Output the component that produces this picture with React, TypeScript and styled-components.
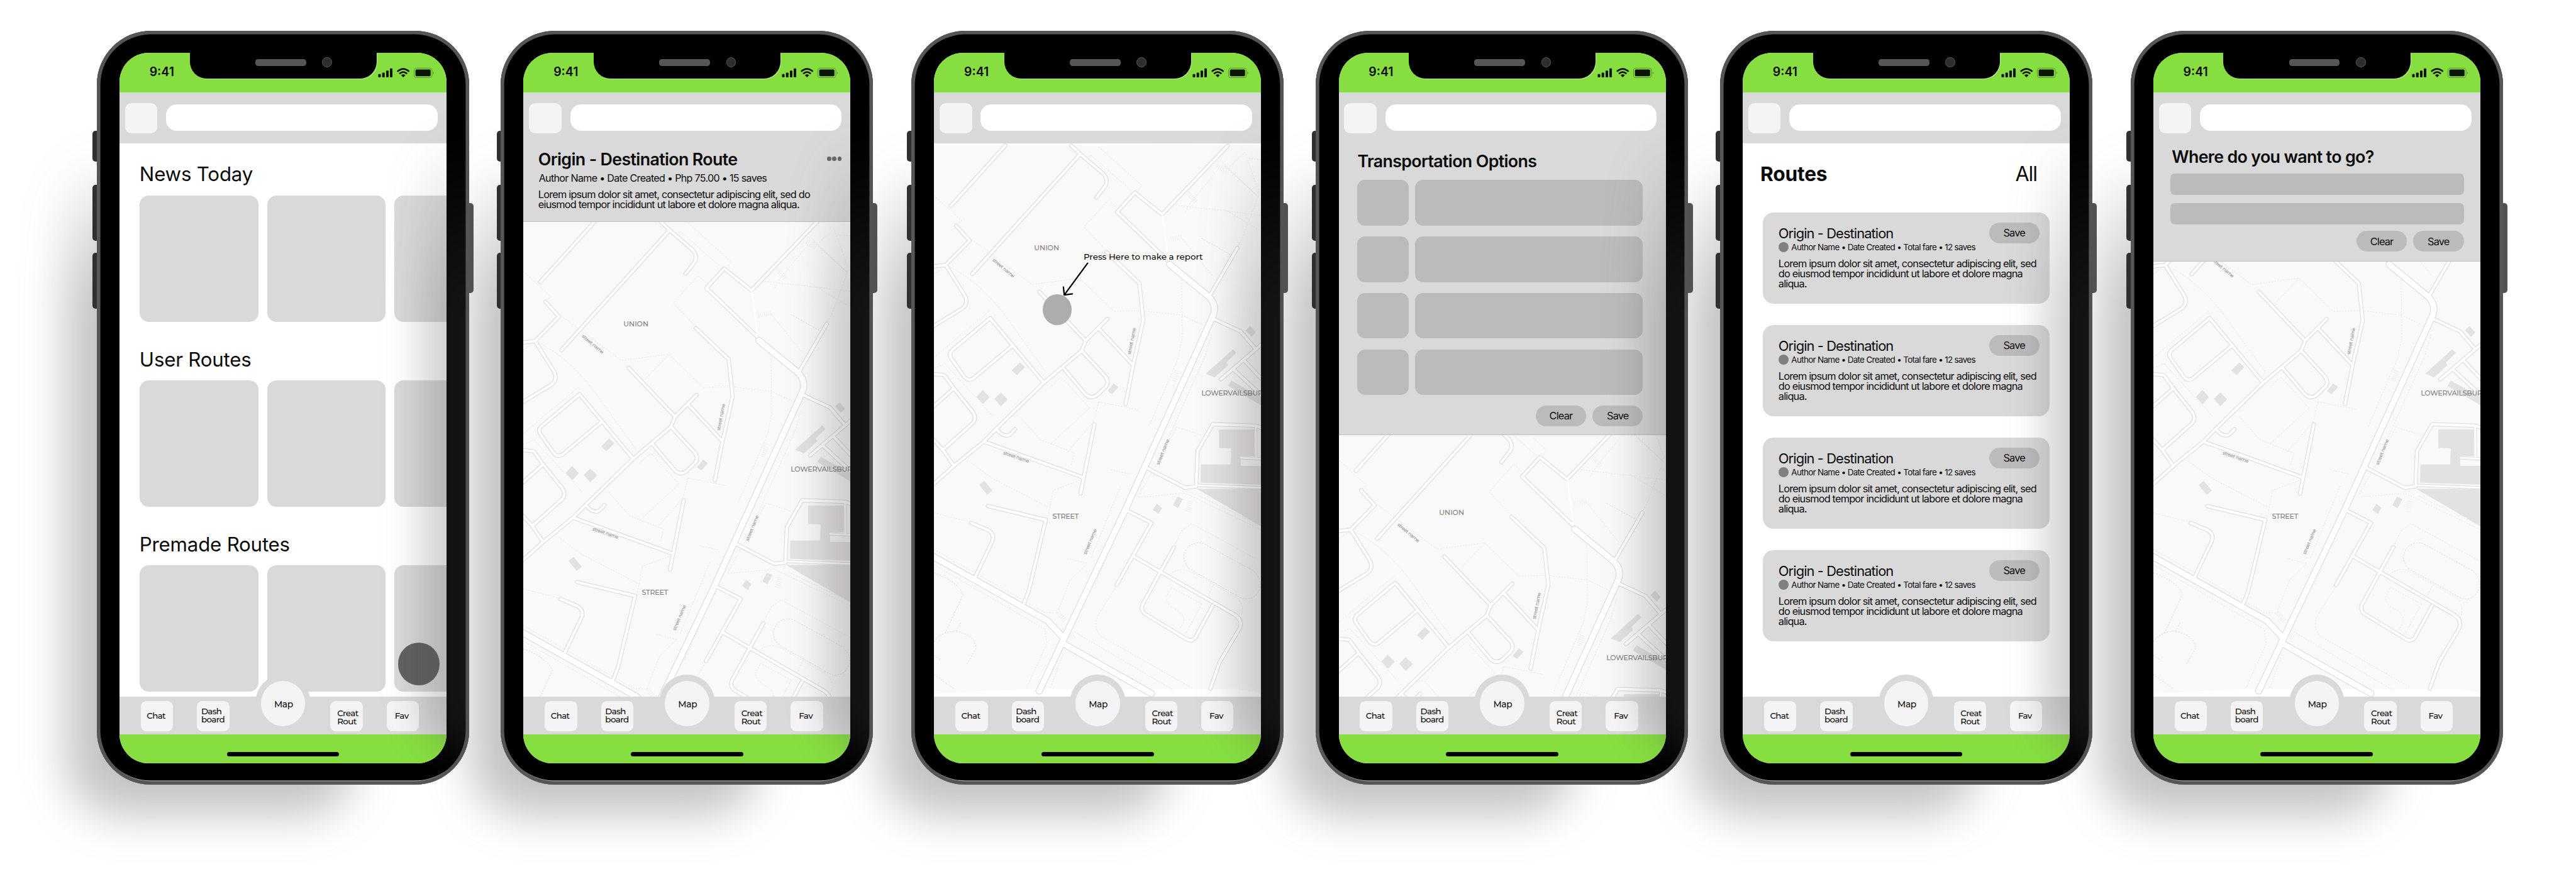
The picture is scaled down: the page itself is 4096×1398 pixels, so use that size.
import React from "react";
import styled, { createGlobalStyle, css } from "styled-components";

/* One design unit of the artboard, in CSS pixels. */
const UNIT = 0.44684;
const u = (n: number) => `${(n * UNIT).toFixed(2)}px`;

const color = {
  green: "#86de40",
  panel: "#d9d9d9",
  tile: "#f4f4f4",
  field: "#bbbbbb",
  ink: "#0c0c0c",
};

const GlobalStyle = createGlobalStyle`
  html, body { margin: 0; padding: 0; background: #ffffff; }
  body { font-family: "Inter", "Liberation Sans", sans-serif; color: ${color.ink}; overflow: hidden; }
  *, *::before, *::after { box-sizing: border-box; }
`;

const Artboard = styled.main`
  display: flex;
  align-items: flex-start;
  width: 4096px;
  height: 1398px;
  padding: 49px 0 0 ${u(344)};
  background: #ffffff;
  isolation: isolate;
  overflow: hidden;
`;

/* ---------- Phone body ---------- */

const Phone = styled.article<{ $gap: number }>`
  position: relative;
  flex: none;
  width: ${u(1325)};
  height: ${u(2684)};
  margin-left: ${(p) => u(p.$gap)};
`;

const DropShadow = styled.div`
  position: absolute;
  z-index: -1;
  left: ${u(-108)};
  top: ${u(430)};
  width: ${u(1030)};
  height: ${u(2360)};
  border-radius: ${u(190)};
  background: linear-gradient(to bottom, rgba(78, 70, 72, 0), rgba(78, 70, 72, 0.33) ${u(520)});
  filter: blur(${u(78)});
`;

const SideKey = styled.span<{ $top: number; $height: number; $right?: boolean }>`
  position: absolute;
  top: ${(p) => u(p.$top)};
  height: ${(p) => u(p.$height)};
  width: ${u(30)};
  border-radius: ${u(11)};
  ${(p) =>
    p.$right
      ? css`
          right: ${u(-16)};
          background: #535151;
        `
      : css`
          left: ${u(-15)};
          background: #303030;
        `}
`;

const Frame = styled.div`
  position: relative;
  width: 100%;
  height: 100%;
  padding: 35px ${u(80)} ${u(77)} ${u(81)};
  border-radius: ${u(192)};
  background: #000000;
  box-shadow: inset 0 0 0 ${u(12.5)} #565656, inset 0 ${u(-15)} 0 #a9a9a9;
  overflow: hidden;
`;

const EdgeShade = styled.div`
  position: absolute;
  left: ${u(1162)};
  top: ${u(342)};
  width: ${u(420)};
  height: ${u(2240)};
  border-radius: ${u(200)};
  background: linear-gradient(to bottom, rgba(78, 70, 72, 0), rgba(78, 70, 72, 0.27) ${u(620)});
  filter: blur(${u(70)});
`;

const Screen = styled.div`
  position: relative;
  display: flex;
  flex-direction: column;
  width: ${u(1164)};
  height: ${u(2528)};
  border-radius: ${u(104)};
  background: #ffffff;
  overflow: hidden;
`;

/* ---------- Status bar ---------- */

const StatusBar = styled.header`
  display: grid;
  grid-template-columns: ${u(250)} ${u(665)} ${u(249)};
  flex: none;
  height: ${u(142)};
  background: ${color.green};
`;

const Clock = styled.span`
  padding-left: ${u(107)};
  font-size: ${u(43.5)};
  font-weight: 600;
  line-height: ${u(138)};
`;

const Notch = styled.div`
  display: flex;
  align-items: center;
  height: ${u(91.5)};
  padding: 0 0 ${u(23)} ${u(233)};
  gap: ${u(57)};
  border-radius: 0 0 ${u(60)} ${u(60)};
  background: #000000;
  box-shadow: 1px 1px 0 rgba(255, 255, 255, 0.4);
`;

const Speaker = styled.span`
  width: ${u(181)};
  height: ${u(24)};
  border-radius: ${u(10)};
  background: #565656;
`;

const Lens = styled.span`
  width: ${u(35)};
  height: ${u(35)};
  border: 1px solid #5a5a5a;
  border-radius: 50%;
  background: #2e2e2e;
`;

const StatusIcons = styled.svg`
  width: ${u(202)};
  height: ${u(38)};
  margin: ${u(51)} 0 0 ${u(5)};
`;

function StatusGlyphs() {
  return (
    <StatusIcons viewBox="1127 239 202 38" aria-hidden>
      <g fill="#0b1405">
        <rect x="1128" y="263" width="9" height="12" rx="2.5" />
        <rect x="1142" y="258" width="9" height="17" rx="2.5" />
        <rect x="1156" y="250.5" width="9" height="24.5" rx="2.5" />
        <rect x="1169.5" y="243" width="9" height="32" rx="2.5" />
        <path d="M1209.5 267.2 Q1217 261 1224.5 267.2 L1217 274.6 Z" />
        <rect x="1260.5" y="247" width="54" height="24" rx="4" />
        <path d="M1323.5 254 Q1328 259 1323.5 264 Z" opacity=".5" />
      </g>
      <g fill="none" stroke="#0b1405" strokeWidth="5.6">
        <path d="M1196 254.5 Q1217 235.5 1238 254.5" />
        <path d="M1203.4 262 Q1217 250 1230.6 262" />
      </g>
      <rect x="1255.5" y="242" width="64" height="34" rx="9" fill="none" stroke="#0b1405" strokeWidth="2" opacity=".42" />
    </StatusIcons>
  );
}

/* ---------- Search header ---------- */

const SearchHeader = styled.div`
  display: flex;
  flex: none;
  align-items: flex-start;
  height: ${u(180)};
  padding: ${u(36)} ${u(32)} 0 ${u(20)};
  gap: ${u(31)};
  background: ${color.panel};
`;

const MenuTile = styled.span`
  flex: none;
  width: ${u(115)};
  height: ${u(109)};
  border-radius: ${u(22)};
  background: ${color.tile};
`;

const SearchField = styled.span`
  flex: 1;
  height: ${u(93)};
  margin-top: ${u(6)};
  border-radius: ${u(38)};
  background: #ffffff;
`;

/* ---------- Bottom navigation ---------- */

const Content = styled.section`
  position: relative;
  display: flex;
  flex: 1;
  flex-direction: column;
  min-height: 0;
  overflow: hidden;
`;

const NavBar = styled.nav`
  position: relative;
  display: flex;
  flex: none;
  height: ${u(134)};
  padding: ${u(15)} 0 0 ${u(76)};
  background: ${color.panel};
  font-family: "Montserrat", "Inter", sans-serif;
  font-size: ${u(30)};
  font-weight: 500;
  line-height: ${u(30)};
  letter-spacing: -0.045em;
`;

const NavTile = styled.span<{ $gap?: number; $top: number; $inset: number }>`
  flex: none;
  width: ${u(115)};
  height: ${u(108)};
  margin-left: ${(p) => u(p.$gap ?? 0)};
  padding: ${(p) => u(p.$top)} 0 0 ${(p) => u(p.$inset)};
  border-radius: ${u(20)};
  background: ${color.tile};
  white-space: nowrap;
`;

const MapButton = styled.span`
  position: absolute;
  left: ${u(483)};
  top: ${u(-78)};
  display: flex;
  align-items: center;
  justify-content: center;
  width: ${u(198)};
  height: ${u(204)};
  border: ${u(21)} solid ${color.panel};
  border-top-width: ${u(24)};
  border-radius: 50%;
  background: ${color.tile};
  font-size: ${u(31)};
  letter-spacing: -0.025em;
  padding: ${u(6)} 0 0 ${u(4)};
`;

const HomeArea = styled.footer`
  display: flex;
  flex: none;
  justify-content: center;
  height: ${u(102.5)};
  padding-top: ${u(63)};
  background: ${color.green};
`;

const HomeIndicator = styled.span`
  width: ${u(400)};
  height: ${u(16)};
  border-radius: ${u(8)};
  background: #000000;
`;

type DeviceProps = { gap?: number; shaded?: boolean; children: React.ReactNode };

function Device({ gap = 0, shaded = true, children }: DeviceProps) {
  return (
    <Phone $gap={gap}>
      <DropShadow />
      <SideKey $top={355} $height={110} />
      <SideKey $top={548} $height={199} />
      <SideKey $top={790} $height={200} />
      <SideKey $top={614} $height={320} $right />
      <Frame>
        <Screen>
          <StatusBar>
            <Clock>9:41</Clock>
            <Notch>
              <Speaker />
              <Lens />
            </Notch>
            <StatusGlyphs />
          </StatusBar>
          <SearchHeader>
            <MenuTile />
            <SearchField />
          </SearchHeader>
          <Content>{children}</Content>
          <NavBar>
            <NavTile $top={38} $inset={21}>Chat</NavTile>
            <NavTile $gap={85} $top={23} $inset={15}>
              Dash
              <br />
              board
            </NavTile>
            <NavTile $gap={360} $top={29} $inset={24}>
              Creat
              <br />
              Rout
            </NavTile>
            <NavTile $gap={85} $top={38} $inset={29}>Fav</NavTile>
            <MapButton>Map</MapButton>
          </NavBar>
          <HomeArea>
            <HomeIndicator />
          </HomeArea>
        </Screen>
        {shaded && <EdgeShade />}
      </Frame>
    </Phone>
  );
}

/* ---------- Street map ---------- */

const MapViewport = styled.div`
  flex: 1;
  min-height: 0;
  overflow: hidden;
  background: #f9f9f9;
`;

const MapDrawing = styled.svg<{ $shift: number }>`
  display: block;
  width: ${u(1164)};
  height: ${u(1970)};
  margin-top: ${(p) => u(p.$shift)};
`;

const SideStreets = [
  "M420 518 L226 733",
  "M655 518 L687 548 L765 615 Q788 636 777 660 L744 703",
  "M687 548 L302 975",
  "M1212 518 L978 763 L881 685 L818 754 L997 926",
  "M1246 882 L1148 1052",
  "M1162 1135 L1257 1179 L1311 1242",
  "M1330 1227 L1187 1350",
  "M1272 1285 L1335 1352",
  "M1232 1315 L1335 1410",
  "M245 803 L293 856 L208 943 L160 948",
  "M208 943 L276 1052 Q290 1078 268 1097 L160 1163",
  "M541 1038 L706 1212",
  "M783 1135 L706 1212 L692 1248 L557 1362 L388 1526 L345 1570 L237 1658 L160 1727",
  "M752 1168 L875 1300",
  "M780 897 L897 1008 L911 1140 L875 1300 L848 1438",
  "M557 1362 L366 1132 L230 1247 Q217 1260 228 1276 L275 1342 Q289 1358 307 1346 L443 1232",
  "M692 1248 L774 1337 Q793 1360 776 1378 L748 1405 Q726 1422 706 1404 L625 1308",
  "M160 1331 L203 1335 L237 1382 L305 1467 Q320 1490 302 1508 L198 1601",
  "M237 1382 L160 1450",
  "M160 1560 L198 1601 L237 1658",
  "M388 1526 Q406 1551 428 1550 Q436 1550 455 1527",
  "M345 1572 L697 1699",
  "M737 1510 L688 1756",
  "M358 1801 L564 1850 L503 2105 L486 2148",
  "M298 1861 L358 1886 Q384 1901 373 1928 L313 2053",
  "M848 1814 L940 1861 L816 2082",
  "M878 1981 L1235 2187 Q1268 2208 1253 2238 L1182 2358 L1150 2451",
  "M1020 1948 L909 2150 Q900 2170 916 2184 L1062 2273 Q1084 2287 1097 2268 L1158 2155",
  "M918 1662 L1060 1736 L1099 1731 L1104 1605 L1158 1510 L1312 1515 L1335 1524",
];

const Avenues = [
  "M1005 941 L1140 1052 Q1174 1083 1160 1122 L848 1812 L625 2281 L541 2459",
  "M150 1973 L570 2209 L625 2268 M625 2290 L940 2468",
];

const Lanes = ["M1099 1727 L1335 1736", "M1311 1517 L1312 1628", "M1258 1629 L1335 1633"];

const Footpaths = [
  "M752 522 L906 660 L890 682",
  "M637 522 L700 570 L725 552 L870 680",
  "M166 695 L265 786 L240 800",
  "M780 892 L700 808 L788 710 L830 748",
  "M300 852 L515 1012 L685 990 L805 1108 L910 1106 L1050 1122 L1140 1165",
  "M685 990 L598 1080",
  "M166 975 L210 945 Q340 1000 460 1180 L565 1325 L545 1345",
  "M166 1272 L366 1105",
  "M1048 985 L1050 1200 L1035 1275 L930 1520",
  "M1155 1190 L1130 1270 L1000 1560",
  "M1212 600 L1272 542 L1325 690",
  "M1185 570 L1320 700 L1262 850 L1148 1052",
  "M1285 565 L1330 568",
  "M1025 730 L1200 750 L1330 766",
  "M1045 843 L1160 985",
  "M1060 755 L1080 720 L1180 600",
  "M1200 745 L1330 822",
  "M166 1310 L205 1295 L375 1480",
  "M720 1452 L620 1342 L575 1382",
  "M752 1430 L735 1500 L640 1610",
  "M752 1430 L892 1458",
  "M720 1452 L580 1582",
  "M440 1481 L470 1481 L545 1565 L665 1612 L655 1655",
  "M290 1640 L370 1700 L575 1806",
  "M685 1710 L590 1745 L570 1850",
  "M795 1672 L865 1687",
  "M166 1825 L295 1858",
  "M166 1955 L560 2180 L605 2182 L650 2065 L712 2005 L640 1987",
  "M166 2010 L560 2238 L568 2290 L495 2450",
  "M1330 1885 L1060 1755 L892 1770 L1030 1520 L1118 1548",
  "M1330 1872 L1110 1765",
  "M725 1985 L830 1730",
  "M740 2080 L900 1700",
  "M625 2330 L580 2450",
  "M1020 1945 L1048 1888 L1083 1864 L1330 1998",
  "M1258 2200 Q1275 2150 1240 2125 L1090 2040 Q1040 2010 1000 2050",
  "M1158 2085 L1140 2125 M1120 2150 L1060 2258 M1120 2150 L1010 2090 L992 2125 Q995 2155 1030 2170 Q1062 2195 1055 2215 L1040 2240",
  "M810 2095 L750 2190 Q730 2235 762 2265 L1082 2447",
  "M665 2248 L1028 2462",
];

const DarkFootpaths = [
  "M1075 2025 Q1045 1990 1062 1960 Q1080 1925 1125 1934 L1300 2030 Q1332 2055 1326 2092 Q1310 2140 1262 2130 Z",
  "M166 2038 Q250 2070 270 2115 L205 2255 M166 2285 Q185 2250 245 2246 L262 2215 M245 2246 Q320 2265 315 2310 L282 2365",
  "M166 2333 L190 2348 M166 2400 L235 2450",
  "M1118 848 L1222 906",
  "M1200 590 L1320 700",
];

const Stairs = [
  "M1175 590 L1208 612",
  "M1068 685 L1098 718",
  "M1003 852 L1047 842",
  "M1020 1355 L1032 1318",
  "M1070 1820 L1082 1780",
  "M608 2180 L632 2210",
  "M650 2270 L668 2260",
];

const Buildings = [
  "M1230 1243 L1242 1255 L1207 1290 L1212 1300 L1165 1343 L1133 1330 Z",
  "M1225 1355 L1335 1416 L1335 1445 L1212 1373 Z",
  "M1291 1160 L1311 1183 L1296 1198 L1275 1176 Z",
  "M443 1318 L472 1290 L490 1306 L462 1335 Z",
  "M340 1388 L364 1413 L341 1438 L317 1413 Z",
  "M404 1397 L429 1421 L404 1446 L381 1419 Z",
  "M784 1392 L806 1365 L823 1377 L800 1403 Z",
  "M345 1711 L374 1746 L356 1761 L327 1726 Z",
  "M1033 1767 L1052 1776 L1035 1809 L1017 1798 Z",
  "M960 1793 L978 1808 L965 1828 L945 1815 Z",
  "M1180 1528 L1305 1528 L1305 1623 L1258 1623 L1258 1658 L1335 1658 L1335 1725 L1115 1718 L1116 1653 L1222 1653 L1224 1596 L1180 1594 Z",
  "M1102 1740 L1335 1740 L1335 1876 Z",
];

const StreetNames = [
  { x: 373, y: 927, angle: 40 },
  { x: 866, y: 1262, angle: -79 },
  { x: 411, y: 1616, angle: 19 },
  { x: 968, y: 1655, angle: -68 },
  { x: 708, y: 1974, angle: -67 },
];

function StreetMap({ shift = 0 }: { shift?: number }) {
  return (
    <MapViewport>
      <MapDrawing $shift={shift} viewBox="166 510 1164 1970" aria-label="Street map">
        <rect x="166" y="510" width="1164" height="1970" fill="#f9f9f9" />
        <path d="M166 510 H1330 V517 L1020 515 L640 517 H166 Z" fill="#ffffff" />
        <path d="M166 2480 V2468 L490 2452 L1255 2453 L1330 2466 V2480 Z" fill="#ffffff" />
        <g fill="#e3e1e2">
          {Buildings.map((d) => (
            <path key={d} d={d} />
          ))}
        </g>
        <g fill="none" stroke="#e9e9e9" strokeWidth="2" strokeDasharray="6 4">
          {Footpaths.map((d) => (
            <path key={d} d={d} />
          ))}
        </g>
        <g fill="none" stroke="#dadada" strokeWidth="2" strokeDasharray="6 4">
          {DarkFootpaths.map((d) => (
            <path key={d} d={d} />
          ))}
        </g>
        <g fill="none" stroke="#eeeeee" strokeWidth="18" strokeDasharray="2 5">
          {Stairs.map((d) => (
            <path key={d} d={d} />
          ))}
        </g>
        <g fill="none" stroke="#d9d9d9" strokeLinecap="round" strokeLinejoin="round">
          {SideStreets.map((d) => (
            <path key={d} d={d} strokeWidth="14.5" />
          ))}
          {Avenues.map((d) => (
            <path key={d} d={d} strokeWidth="25" />
          ))}
          {Lanes.map((d) => (
            <path key={d} d={d} strokeWidth="11" />
          ))}
        </g>
        <g fill="none" stroke="#ffffff" strokeLinecap="round" strokeLinejoin="round">
          <path d="M980 768 L1000 925" strokeWidth="6" />
          {SideStreets.map((d) => (
            <path key={d} d={d} strokeWidth="10" />
          ))}
          {Avenues.map((d) => (
            <path key={d} d={d} strokeWidth="20.5" />
          ))}
          {Lanes.map((d) => (
            <path key={d} d={d} strokeWidth="7" />
          ))}
        </g>
        <g fontFamily="Montserrat, Inter, sans-serif" fontSize="25" fontWeight="500" fill="#7d7d7d">
          <text x="522.5" y="890">UNION</text>
          <text x="588" y="1847" letterSpacing="-.6">STREET</text>
          <text x="1117.5" y="1407" letterSpacing="-.7">LOWERVAILSBURG</text>
        </g>
        <g fontFamily="Montserrat, Inter, sans-serif" fontSize="17" fontWeight="500" fill="#8f8f8f" letterSpacing="-.8">
          {StreetNames.map((s) => (
            <text key={s.x} transform={`translate(${s.x} ${s.y}) rotate(${s.angle})`}>
              street name
            </text>
          ))}
        </g>
      </MapDrawing>
    </MapViewport>
  );
}

/* ---------- Shared panel parts ---------- */

const Panel = styled.div<{ $height: number; $top: number; $left: number; $right: number }>`
  display: flex;
  flex: none;
  flex-direction: column;
  height: ${(p) => u(p.$height)};
  padding: ${(p) => u(p.$top)} ${(p) => u(p.$right)} 0 ${(p) => u(p.$left)};
  border-bottom: ${u(3)} solid #bfbfbf;
  background: ${color.panel};
`;

const PanelTitle = styled.h2<{ $inset?: number }>`
  margin: 0 0 0 ${(p) => u(p.$inset ?? 0)};
  font-size: ${u(60)};
  font-weight: 600;
  line-height: ${u(72)};
  letter-spacing: -0.0245em;
  white-space: nowrap;
`;

const BodyCopy = styled.p<{ $gap: number }>`
  margin: ${(p) => u(p.$gap)} 0 0;
  font-size: ${u(36.5)};
  line-height: ${u(36)};
  letter-spacing: -0.049em;
  white-space: nowrap;
`;

const Pill = styled.span`
  display: flex;
  flex: none;
  align-items: center;
  justify-content: center;
  width: ${u(180)};
  height: ${u(75)};
  border-radius: ${u(38)};
  background: ${color.field};
  font-size: ${u(36.5)};
  letter-spacing: -0.05em;
`;

const PillRow = styled.div<{ $top: number }>`
  display: flex;
  justify-content: flex-end;
  gap: ${u(22)};
  margin-top: ${(p) => u(p.$top)};
`;

/* ---------- Home ---------- */

const Feed = styled.div`
  display: flex;
  flex: none;
  flex-direction: column;
  gap: ${u(94)};
  padding: ${u(70.5)} 0 0 ${u(72)};
`;

const SectionTitle = styled.h2`
  margin: 0 0 ${u(31.5)} ${u(-0.5)};
  font-size: ${u(70)};
  font-weight: 400;
  line-height: ${u(84)};
  letter-spacing: -0.007em;
  white-space: nowrap;
`;

const CardStrip = styled.div`
  display: flex;
  gap: ${u(31.5)};
`;

const Card = styled.span`
  flex: none;
  width: ${u(422)};
  height: ${u(449)};
  border-radius: ${u(33)};
  background: ${color.panel};
`;

const FloatingAction = styled.span`
  position: absolute;
  left: ${u(991)};
  bottom: ${u(41)};
  width: ${u(149)};
  height: ${u(151)};
  border-radius: 50%;
  background: #606060;
`;

function HomeScreen() {
  return (
    <>
      <Feed>
        {["News Today", "User Routes", "Premade Routes"].map((title) => (
          <div key={title}>
            <SectionTitle>{title}</SectionTitle>
            <CardStrip>
              <Card />
              <Card />
              <Card />
            </CardStrip>
          </div>
        ))}
      </Feed>
      <FloatingAction />
    </>
  );
}

/* ---------- Route detail ---------- */

const TitleRow = styled.div`
  display: flex;
  align-items: center;
  justify-content: space-between;
`;

const Dots = styled.span`
  display: flex;
  gap: ${u(3)};
  margin: 0 ${u(32)} ${u(4)} 0;

  i {
    width: ${u(15)};
    height: ${u(15)};
    border-radius: 50%;
    background: #666666;
  }
`;

const DetailMeta = styled.p`
  margin: ${u(9.7)} 0 0 ${u(2)};
  font-size: ${u(36)};
  line-height: ${u(44)};
  letter-spacing: -0.0427em;
  white-space: nowrap;
`;

function RouteDetailScreen() {
  return (
    <>
      <Panel $height={281} $top={21} $left={52.5} $right={0}>
        <TitleRow>
          <PanelTitle>Origin - Destination Route</PanelTitle>
          <Dots>
            <i />
            <i />
            <i />
          </Dots>
        </TitleRow>
        <DetailMeta>Author Name • Date Created • Php 75.00 • 15 saves</DetailMeta>
        <BodyCopy $gap={17.6}>
          Lorem ipsum dolor sit amet, consectetur adipiscing elit, sed do
          <br />
          eiusmod tempor incididunt ut labore et dolore magna aliqua.
        </BodyCopy>
      </Panel>
      <StreetMap shift={-9} />
    </>
  );
}

/* ---------- Report ---------- */

const ReportPin = styled.span`
  position: absolute;
  left: ${u(387)};
  top: ${u(538)};
  width: ${u(103)};
  height: ${u(108)};
  border-radius: 50%;
  background: #adadad;
`;

const ReportHint = styled.span`
  position: absolute;
  left: ${u(532)};
  top: ${u(385)};
  font-family: "Montserrat", "Inter", sans-serif;
  font-size: ${u(30)};
  font-weight: 500;
  line-height: ${u(40)};
  white-space: nowrap;
`;

const ReportArrow = styled.svg`
  position: absolute;
  left: ${u(450)};
  top: ${u(418)};
  width: ${u(110)};
  height: ${u(130)};
`;

function ReportScreen() {
  return (
    <>
      <StreetMap />
      <ReportPin />
      <ReportArrow viewBox="616 928 110 130" aria-hidden>
        <path
          d="M713 936 L630 1049 M627 1021 L630 1049 L659 1045"
          fill="none"
          stroke="#000000"
          strokeWidth="5"
          strokeLinecap="round"
          strokeLinejoin="round"
        />
      </ReportArrow>
      <ReportHint>Press Here to make a report</ReportHint>
    </>
  );
}

/* ---------- Transportation options ---------- */

const OptionList = styled.div`
  display: grid;
  grid-template-columns: ${u(185)} ${u(812)};
  grid-auto-rows: ${u(162)};
  gap: ${u(39)} ${u(21)};
  margin-top: ${u(30.8)};
`;

const OptionBlock = styled.span`
  border-radius: ${u(28)};
  background: ${color.field};
`;

function TransportScreen() {
  return (
    <>
      <Panel $height={1038} $top={28.2} $left={65} $right={81}>
        <PanelTitle $inset={2}>Transportation Options</PanelTitle>
        <OptionList>
          {Array.from({ length: 8 }, (_, i) => (
            <OptionBlock key={i} />
          ))}
        </OptionList>
        <PillRow $top={37}>
          <Pill>Clear</Pill>
          <Pill>Save</Pill>
        </PillRow>
      </Panel>
      <StreetMap shift={-95.5} />
    </>
  );
}

/* ---------- Saved routes ---------- */

const RoutesHeading = styled.div`
  display: flex;
  align-items: baseline;
  justify-content: space-between;
  height: ${u(84)};
  margin: ${u(68)} ${u(117)} 0 ${u(62.5)};
  font-size: ${u(71)};
  line-height: ${u(84)};
`;

const RoutesTitle = styled.h2`
  margin: 0;
  font-size: inherit;
  font-weight: 700;
  letter-spacing: -0.006em;
`;

const RoutesFilter = styled.span`
  font-size: ${u(72)};
  letter-spacing: -0.035em;
`;

const RouteList = styled.div`
  display: flex;
  flex-direction: column;
  gap: ${u(75.6)};
  margin: ${u(93.8)} ${u(72)} 0 ${u(71.5)};
`;

const RouteCard = styled.div`
  flex: none;
  height: ${u(325)};
  padding: ${u(36)} ${u(36)} 0 ${u(55.5)};
  border-radius: ${u(38)};
  background: ${color.panel};
`;

const RouteCardHead = styled.div`
  display: flex;
  align-items: flex-start;
  justify-content: space-between;
`;

const RouteCardTitle = styled.h3`
  margin: ${u(10)} 0 0;
  font-size: ${u(49)};
  font-weight: 400;
  line-height: ${u(59)};
  letter-spacing: -0.042em;
  white-space: nowrap;
`;

const Byline = styled.div`
  display: flex;
  align-items: center;
  gap: ${u(10)};
  height: ${u(36)};
  font-size: ${u(30)};
  line-height: ${u(36)};
  letter-spacing: -0.0495em;
  white-space: nowrap;
`;

const Avatar = styled.span`
  width: ${u(36)};
  height: ${u(36)};
  border-radius: 50%;
  background: #808080;
`;

function RoutesScreen() {
  return (
    <>
      <RoutesHeading>
        <RoutesTitle>Routes</RoutesTitle>
        <RoutesFilter>All</RoutesFilter>
      </RoutesHeading>
      <RouteList>
        {[0, 1, 2, 3].map((i) => (
          <RouteCard key={i}>
            <RouteCardHead>
              <div>
                <RouteCardTitle>Origin - Destination</RouteCardTitle>
                <Byline>
                  <Avatar />
                  <span>Author Name • Date Created • Total fare • 12 saves</span>
                </Byline>
              </div>
              <Pill>Save</Pill>
            </RouteCardHead>
            <BodyCopy $gap={22.5}>
              Lorem ipsum dolor sit amet, consectetur adipiscing elit, sed
              <br />
              do eiusmod tempor incididunt ut labore et dolore magna
              <br />
              aliqua.
            </BodyCopy>
          </RouteCard>
        ))}
      </RouteList>
    </>
  );
}

/* ---------- Destination search ---------- */

const InputStack = styled.div`
  display: flex;
  flex-direction: column;
  gap: ${u(30)};
  margin-top: ${u(24.8)};
`;

const InputBar = styled.span`
  height: ${u(75)};
  border-radius: ${u(16)};
  background: ${color.field};
`;

function DestinationScreen() {
  return (
    <>
      <Panel $height={422} $top={11.2} $left={62} $right={59}>
        <PanelTitle $inset={4}>Where do you want to go?</PanelTitle>
        <InputStack>
          <InputBar />
          <InputBar />
        </InputStack>
        <PillRow $top={23}>
          <Pill>Clear</Pill>
          <Pill>Save</Pill>
        </PillRow>
      </Panel>
      <StreetMap shift={-422} />
    </>
  );
}

export default function App() {
  return (
    <>
      <GlobalStyle />
      <Artboard>
        <Device>
          <HomeScreen />
        </Device>
        <Device gap={112.9}>
          <RouteDetailScreen />
        </Device>
        <Device gap={136.1}>
          <ReportScreen />
        </Device>
        <Device gap={114.7}>
          <TransportScreen />
        </Device>
        <Device gap={113}>
          <RoutesScreen />
        </Device>
        <Device gap={135.8} shaded={false}>
          <DestinationScreen />
        </Device>
      </Artboard>
    </>
  );
}
